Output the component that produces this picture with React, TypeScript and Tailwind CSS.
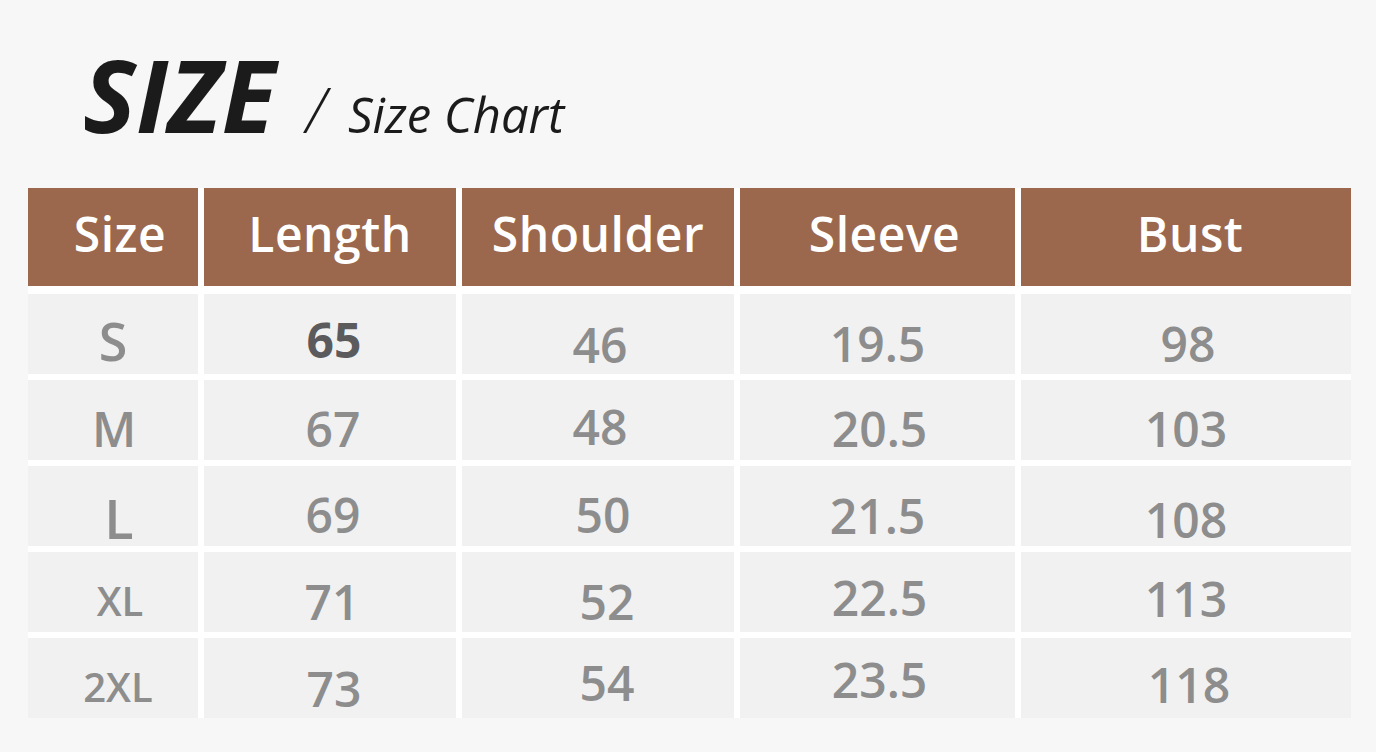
type Cell = {
  v: string;
  cls: string;
};

const headers = [
  { v: "Size", cls: "pl-[14px]" },
  { v: "Length", cls: "" },
  { v: "Shoulder", cls: "" },
  { v: "Sleeve", cls: "pl-[14px]" },
  { v: "Bust", cls: "pl-[8px]" },
];

const num = "text-[48px] font-semibold text-[#8d8d8d]";
const sz = "font-semibold text-[#8d8d8d]";

// values sit a little unevenly in the source chart, so each cell keeps its own offset
const rows: Cell[][] = [
  [
    { v: "S", cls: sz + " text-[52px] pt-[21px]" },
    { v: "65", cls: "text-[48px] font-bold text-[#5b5b5d] pt-[22px] pl-[8px]" },
    { v: "46", cls: num + " pt-[27px] pl-[4px]" },
    { v: "19.5", cls: num + " pt-[26px]" },
    { v: "98", cls: num + " pt-[26px] pl-[4px]" },
  ],
  [
    { v: "M", cls: sz + " text-[48px] pt-[25px] pl-[2px]" },
    { v: "67", cls: num + " pt-[25px] pl-[6px]" },
    { v: "48", cls: num + " pt-[23px] pl-[4px]" },
    { v: "20.5", cls: num + " pt-[25px] pl-[4px]" },
    { v: "103", cls: num + " pt-[25px]" },
  ],
  [
    { v: "L", cls: sz + " text-[54px] pt-[25px] pl-[12px]" },
    { v: "69", cls: num + " pt-[25px] pl-[6px]" },
    { v: "50", cls: num + " pt-[25px] pl-[10px]" },
    { v: "21.5", cls: num + " pt-[26px]" },
    { v: "108", cls: num + " pt-[30px]" },
  ],
  [
    { v: "XL", cls: sz + " text-[40px] pt-[29px] pl-[14px]" },
    { v: "71", cls: num + " pt-[26px] pl-[4px]" },
    { v: "52", cls: num + " pt-[26px] pl-[18px]" },
    { v: "22.5", cls: num + " pt-[22px] pl-[4px]" },
    { v: "113", cls: num + " pt-[23px]" },
  ],
  [
    { v: "2XL", cls: sz + " text-[40px] pt-[29px] pl-[10px]" },
    { v: "73", cls: num + " pt-[27px] pl-[8px]" },
    { v: "54", cls: num + " pt-[21px] pl-[18px]" },
    { v: "23.5", cls: num + " pt-[18px] pl-[4px]" },
    { v: "118", cls: num + " pt-[23px] pl-[6px]" },
  ],
];

export default function App() {
  return (
    <div
      className="h-[752px] w-[1376px] overflow-hidden bg-[#f7f7f7]"
      style={{ fontFamily: '"Open Sans", "Noto Sans", sans-serif' }}
    >
      <div className="flex items-baseline pl-[83px] pt-[44px]">
        <h1 className="text-[100px] leading-none font-bold italic text-[#1b1b1b]">
          SIZE
        </h1>
        <span className="ml-[30px] text-[62px] leading-none font-light italic text-[#1b1b1b]">
          /
        </span>
        <span className="ml-[22px] text-[49px] leading-none font-medium italic text-[#1b1b1b]">
          Size Chart
        </span>
      </div>

      <div className="mt-[44px] ml-[28px] grid w-fit grid-cols-[170px_252px_272px_275px_330px] gap-[6px] bg-white">
        {headers.map((h) => (
          <div
            key={h.v}
            className={
              "mb-[2px] flex h-[98px] items-center justify-center bg-[#9b684d] pb-[6px] text-[48px] leading-none font-semibold tracking-[0.5px] text-white " +
              h.cls
            }
          >
            {h.v}
          </div>
        ))}
        {rows.map((row, i) =>
          row.map((c, j) => (
            <div
              key={i + "-" + j}
              className={"h-[80px] bg-[#f1f1f1] text-center leading-none " + c.cls}
            >
              {c.v}
            </div>
          ))
        )}
      </div>
    </div>
  );
}
